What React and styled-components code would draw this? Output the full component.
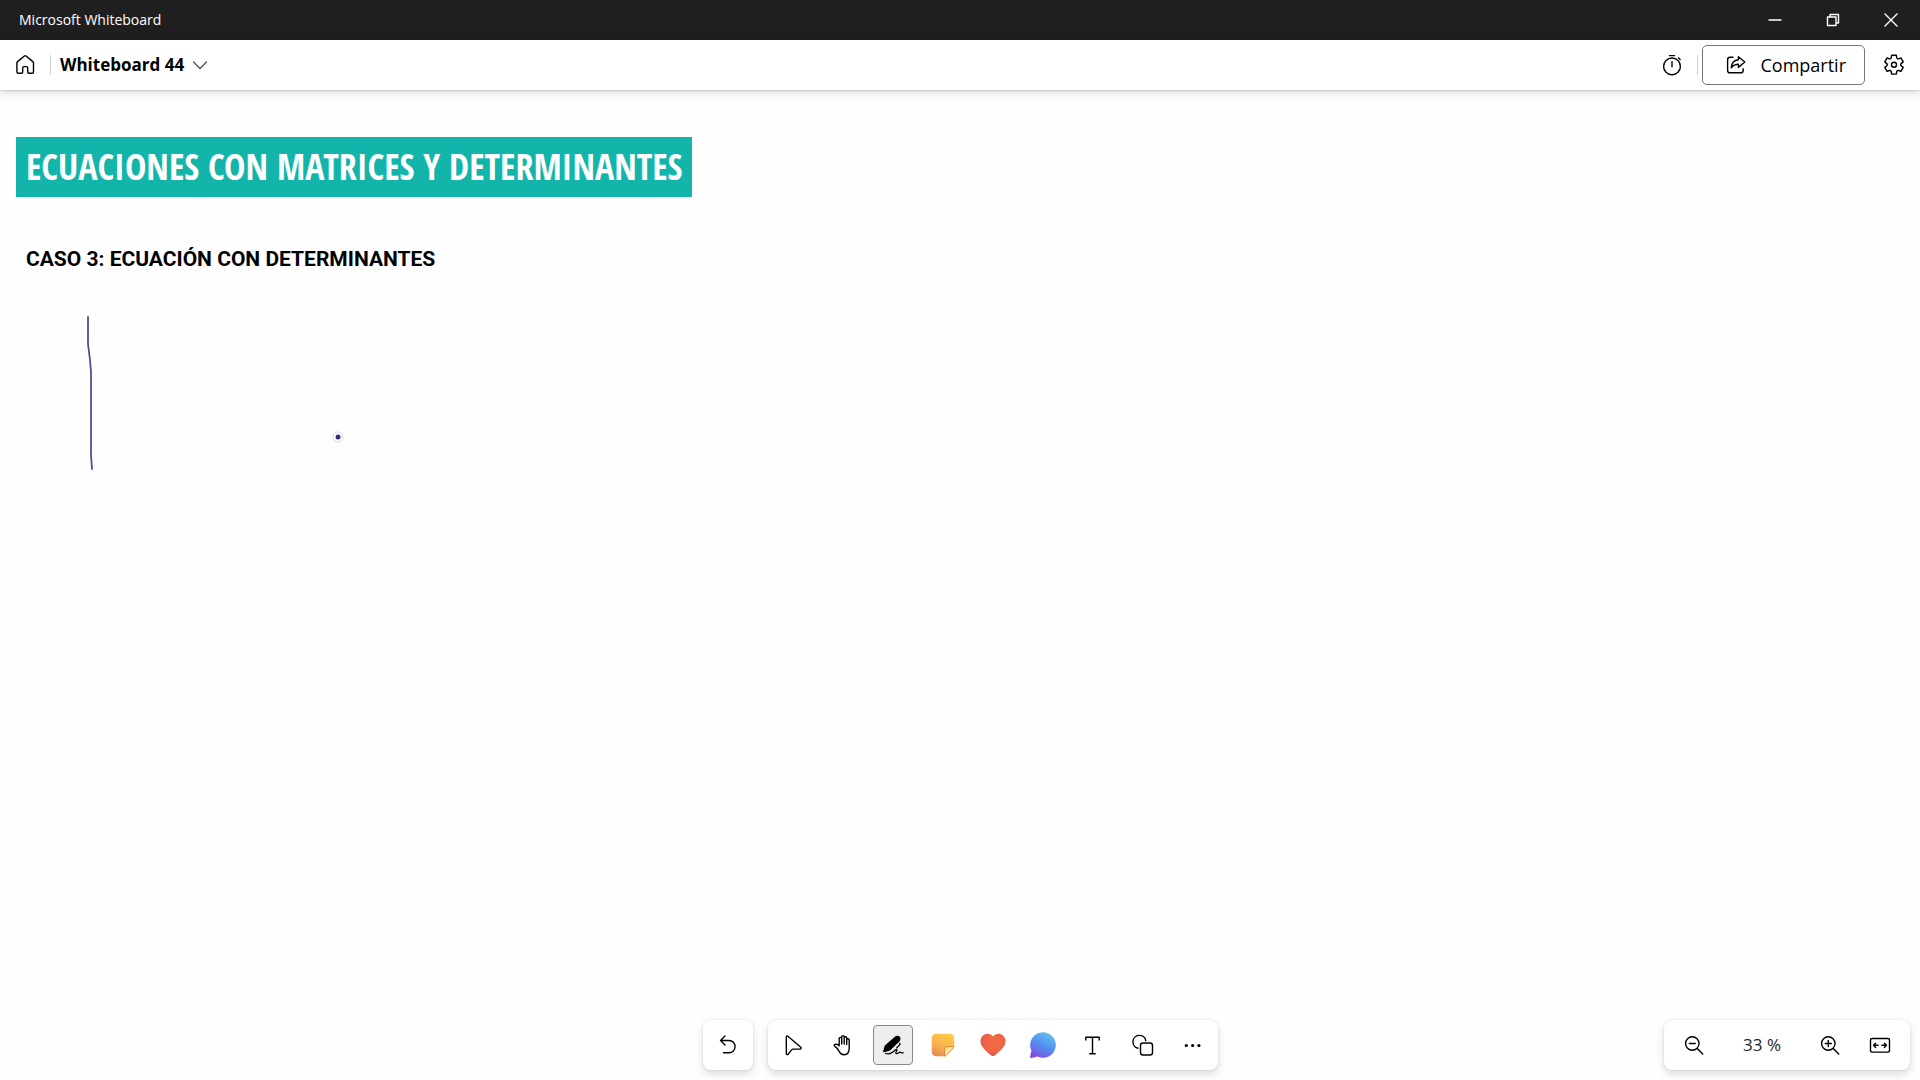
import React, { useState } from 'react';
import styled, { createGlobalStyle } from 'styled-components';

const GlobalStyle = createGlobalStyle`
  * {
    box-sizing: border-box;
  }
  body {
    margin: 0;
    background: #fefefe;
    font-family: "Open Sans", "Noto Sans", sans-serif;
  }
  button {
    font-family: inherit;
    padding: 0;
    border: none;
    background: none;
    color: inherit;
    cursor: pointer;
  }
`;

// Layout
const Page = styled.div`
  display: flex;
  flex-direction: column;
  min-height: 100vh;
`;

const TitleBar = styled.div`
  display: flex;
  align-items: stretch;
  justify-content: space-between;
  height: 40px;
  background: #1f1f1f;
  color: #fff;
`;

const AppName = styled.span`
  padding-left: 19px;
  font-size: 14px;
  line-height: 40px;
`;

const WindowControls = styled.div`
  display: flex;
`;

const WindowButton = styled.button`
  display: flex;
  align-items: center;
  justify-content: center;
  width: 58px;
`;

const Header = styled.header`
  display: flex;
  align-items: center;
  justify-content: space-between;
  height: 50px;
  background: #fff;
  box-shadow: 0 1px 2px rgba(0, 0, 0, 0.16), 0 4px 10px rgba(0, 0, 0, 0.1);
`;

const HeaderGroup = styled.div`
  display: flex;
  align-items: center;
`;

const IconButton = styled.button`
  display: flex;
  align-items: center;
  justify-content: center;
  width: ${(props) => props.$width || 50}px;
  height: 50px;
`;

const Divider = styled.span`
  width: 1px;
  height: 20px;
  background: #d1d1d1;
`;

const BoardName = styled.button`
  display: flex;
  align-items: center;
  gap: 8px;
  padding-left: 9px;
  font-size: 17px;
  font-weight: 700;
  line-height: 24px;
`;

const ShareButton = styled.button`
  display: flex;
  align-items: center;
  gap: 12px;
  height: 40px;
  margin: 0 3px 0 4px;
  padding: 0 18px 0 21px;
  border: 1px solid #767676;
  border-radius: 5px;
  background: #fff;
  font-size: 18px;
  line-height: 24px;
`;

// Board content
const Board = styled.main`
  position: relative;
  flex: 1;
  padding: 47px 16px 0;
`;

const Banner = styled.h1`
  width: max-content;
  margin: 0;
  padding: 0 10px;
  background: #13b5aa;
  color: #fff;
  font-family: "Open Sans Condensed", "Liberation Sans Narrow", sans-serif;
  font-size: 36px;
  font-weight: 700;
  line-height: 60px;
`;

const CaseTitle = styled.h2`
  margin: 50px 0 0 10px;
  font-family: Roboto, "Liberation Sans", sans-serif;
  font-size: 21px;
  font-weight: 700;
  line-height: 24px;
`;

const Ink = styled.svg`
  position: absolute;
  top: 0;
  left: 0;
`;

// Bottom bar
const Footer = styled.footer`
  display: grid;
  grid-template-columns: 1fr auto 1fr;
  padding: 0 10px 10px;
`;

const ToolGroups = styled.div`
  grid-column: 2;
  display: flex;
  gap: 15px;
`;

const Panel = styled.div`
  display: flex;
  align-items: center;
  height: 50px;
  padding: 0 ${(props) => props.$pad || 0}px;
  border-radius: 8px;
  background: #fff;
  box-shadow: 0 0 2px rgba(0, 0, 0, 0.12), 0 4px 8px rgba(0, 0, 0, 0.14);
`;

const ZoomPanel = styled(Panel)`
  justify-self: end;
`;

const Tool = styled.button`
  display: flex;
  align-items: center;
  justify-content: center;
  width: 40px;
  height: 40px;
  margin: 0 5px;
  border: 1px solid ${(props) => (props.$active ? '#8a8a8a' : 'transparent')};
  border-radius: 4px;
  background: ${(props) => (props.$active ? '#ededed' : 'transparent')};
`;

const ZoomLevel = styled.span`
  width: 86px;
  text-align: center;
  color: #242424;
  font-size: 17px;
  line-height: 24px;
`;

const Svg = styled.svg`
  display: block;
  flex: none;
  fill: none;
  stroke: currentColor;
  stroke-width: 1.4;
  stroke-linecap: round;
  stroke-linejoin: round;
`;

const Icon = ({ size = 24, children }) => (
  <Svg width={size} height={size} viewBox={`0 0 ${size} ${size}`} aria-hidden="true">
    {children}
  </Svg>
);

const HomeIcon = () => (
  <Icon>
    <path d="M11.4 3 4.6 8.6a1.8 1.8 0 0 0-.7 1.4v9c0 .8.5 1.3 1.3 1.3h3.2c.8 0 1.3-.5 1.3-1.3v-4.2c0-.7.5-1.2 1.2-1.2h2.6c.7 0 1.2.5 1.2 1.2V19c0 .8.5 1.3 1.3 1.3h3.2c.8 0 1.3-.5 1.3-1.3v-9c0-.5-.3-1-.7-1.4L13 3a1.3 1.3 0 0 0-1.6 0z" />
  </Icon>
);

const TimerIcon = () => (
  <Icon>
    <circle cx="12" cy="13.4" r="8.4" />
    <path d="M9.5 2.6h5M12 8.8v5M18.6 4.9l1.5 1.5" />
  </Icon>
);

const ShareIcon = () => (
  <Icon>
    <path d="M9 4.2H6A2.4 2.4 0 0 0 3.6 6.6v10.8A2.4 2.4 0 0 0 6 19.8h10.8a2.4 2.4 0 0 0 2.4-2.4v-1.6" />
    <path d="M14.4 3.7v3.1C10 7.2 7.7 10 7.2 14.8c2-2.5 4.2-3.5 7.2-3.5v3.1l6.4-5.4z" />
  </Icon>
);

const GearIcon = () => (
  <Icon>
    <path d="M9.7 2.2h4.6l.5 2.6c.2.9.9 1.3 1.7 1l2.4-.9 2.3 4-2 1.700c-.7.6-.7 1.5 0 2.1l2 1.7-2.3 4-2.4-.9c-.8-.3-1.500.1-1.700 1l-.5 2.600H9.700l-.5-2.600c-.2-.9-.9-1.300-1.700-1l-2.400.9-2.300-4 2-1.700c.7-.6.7-1.500 0-2.100l-2-1.700 2.300-4 2.400.9c.8.3 1.500-.1 1.700-1z" />
    <circle cx="12" cy="11.7" r="2.5" />
  </Icon>
);

const UndoIcon = () => (
  <Icon>
    <path d="M9 3 4.5 7.5 9 12M4.5 7.5H13a6.1 6.1 0 0 1 0 12.2H7.5" />
  </Icon>
);

const SelectIcon = () => (
  <Icon>
    <path d="M5.3 4.1v16.4c0 1.1 1.1 1.5 1.8.7l3.5-4.3c.4-.5.9-.8 1.6-.8h6.9c1.1 0 1.5-1.2.7-1.9L6.9 3.3c-.7-.6-1.6-.1-1.6.8z" />
  </Icon>
);

const HandIcon = () => (
  <Icon>
    <path d="M8.2 12.8V5.6a1.25 1.25 0 0 1 2.5 0V11M10.7 5.6V3.9a1.25 1.25 0 0 1 2.5 0V11M13.2 5a1.25 1.25 0 0 1 2.5 0v6.5M15.7 7a1.25 1.25 0 0 1 2.5 0v8c0 4-1.7 6.8-5.2 6.8-2.5 0-3.9-1.3-5-3.5-1.2-2.3-2.3-3.8-4.3-5.1-.8-.5-.6-1.5.3-1.8 1.7-.5 3.1.1 4.2 1.4" />
  </Icon>
);

const PenIcon = () => (
  <Icon>
    <path
      d="M13.6 4c1.5-1.5 3.7-1.6 5-.4s1.2 3.4-.3 4.9L9.6 17c-.5.5-1.1.8-1.8 1l-4.9 1.2c-.5.1-.9-.3-.8-.8l1.3-4.6c.2-.7.5-1.2 1-1.7z"
      fill="currentColor"
      stroke="none"
    />
    <path
      d="M4.5 20.5c2.800.9 5.300.3 7.300-1.400 1.500-1.300 3.300-3.200 4.100-2.500s-1.900 3-1 3.800 2-.3 2.900-.8c1.200-.7 1.600-.4 2.400 0s1.400.4 2 .2M18.600 10.200c.6.600.4 1.300-.2 1.900l-2.600 2.600"
      strokeWidth="1.3"
    />
  </Icon>
);

const NoteIcon = () => (
  <Icon>
    <defs>
      <linearGradient id="note" x1="0.7" y1="0" x2="0.15" y2="1">
        <stop offset="0" stopColor="#fcc945" />
        <stop offset="0.55" stopColor="#f8b34f" />
        <stop offset="1" stopColor="#e58650" />
      </linearGradient>
      <linearGradient id="fold" x1="0" y1="0" x2="0.7" y2="0.7">
        <stop offset="0" stopColor="#fbd075" />
        <stop offset="1" stopColor="#fff0b8" />
      </linearGradient>
    </defs>
    <path
      d="M5 .8h14A4.2 4.2 0 0 1 23.2 5v8.8l-9.4 9.4H5A4.2 4.2 0 0 1 .8 19V5A4.2 4.2 0 0 1 5 .8z"
      fill="url(#note)"
      stroke="none"
    />
    <path
      d="M13.4 22.8V17a3.6 3.6 0 0 1 3.6-3.6h5.8c0 .9-.4 1.6-1 2.2l-6.2 6.2c-.6.6-1.3 1-2.2 1z"
      fill="url(#fold)"
      stroke="#d98a35"
      strokeWidth="1"
    />
  </Icon>
);

const HeartIcon = () => (
  <Icon size={26}>
    <defs>
      <radialGradient id="heart" cx="0.55" cy="0.4" r="0.65">
        <stop offset="0" stopColor="#f46a43" />
        <stop offset="0.65" stopColor="#ed6446" />
        <stop offset="1" stopColor="#c85456" />
      </radialGradient>
    </defs>
    <path
      d="M13 4.6C10.5 1.3 6 1 3 3.5 0 6.2-.3 10.8 2 14.2c2.4 3.6 6 6.6 9.3 9.2a2.7 2.7 0 0 0 3.4 0c3.3-2.6 6.9-5.6 9.3-9.2 2.3-3.4 2-8-1-10.7-3-2.5-7.5-2.2-10 1.1z"
      fill="url(#heart)"
      stroke="none"
    />
  </Icon>
);

const CommentIcon = () => (
  <Icon size={26}>
    <defs>
      <linearGradient id="bubble" x1="0.75" y1="0.05" x2="0.25" y2="1">
        <stop offset="0" stopColor="#62bdee" />
        <stop offset="0.5" stopColor="#548fee" />
        <stop offset="0.8" stopColor="#6d68e6" />
        <stop offset="1" stopColor="#8c44d8" />
      </linearGradient>
    </defs>
    <path
      d="M13 .2A12.8 12.8 0 1 1 7.6 24.6L1.4 25.9C.6 26 0 25.4.2 24.6L1.4 18.6A12.8 12.8 0 0 1 13 .2z"
      fill="url(#bubble)"
      stroke="none"
    />
  </Icon>
);

const TextIcon = () => (
  <Icon>
    <path d="M4.8 7V4.3h13.4V7M11.5 4.3v16.4M8.8 20.7h5.4" />
  </Icon>
);

const ShapesIcon = () => (
  <Icon>
    <path d="M7 15.2A6.5 6.5 0 1 1 14.8 7.5" />
    <rect x="9.5" y="10" width="12" height="12" rx="2.5" />
  </Icon>
);

const MoreIcon = () => (
  <Icon>
    <g fill="currentColor" stroke="none">
      <circle cx="5.3" cy="12.5" r="1.6" />
      <circle cx="11.6" cy="12.5" r="1.6" />
      <circle cx="17.9" cy="12.5" r="1.6" />
    </g>
  </Icon>
);

const ZoomIcon = ({ plus }) => (
  <Icon>
    <circle cx="10.3" cy="10.5" r="6.7" />
    <path d="M7.3 10.5h6M15.2 15.4l5.5 5.5" />
    {plus && <path d="M10.3 7.5v6" />}
  </Icon>
);

const FitIcon = () => (
  <Icon>
    <rect x="2.5" y="5.5" width="19" height="13.6" rx="1.5" />
    <path d="M10 12.3H5.7M7.6 10.2l-2.1 2.1 2.1 2.1M14 12.3h4.3M16.4 10.2l2.1 2.1-2.1 2.1" />
  </Icon>
);

const tools = [
  { name: 'Seleccionar', icon: SelectIcon },
  { name: 'Desplazar', icon: HandIcon },
  { name: 'Entrada manuscrita', icon: PenIcon },
  { name: 'Notas', icon: NoteIcon },
  { name: 'Reacciones', icon: HeartIcon },
  { name: 'Comentario', icon: CommentIcon },
  { name: 'Texto', icon: TextIcon },
  { name: 'Formas', icon: ShapesIcon },
  { name: 'Más opciones', icon: MoreIcon },
];

function App() {
  const [activeTool, setActiveTool] = useState('Entrada manuscrita');
  const [zoom, setZoom] = useState(33);

  return (
    <Page>
      <GlobalStyle />
      <TitleBar>
        <AppName>Microsoft Whiteboard</AppName>
        <WindowControls>
          <WindowButton aria-label="Minimizar">
            <Icon size={14}><path d="M1 7h12" /></Icon>
          </WindowButton>
          <WindowButton aria-label="Restaurar">
            <Icon size={14}>
              <path d="M1.5 4H10v8.5H1.5zM4 4V1.5h8.5V10H10" />
            </Icon>
          </WindowButton>
          <WindowButton aria-label="Cerrar">
            <Icon size={14}><path d="M1 1l12 12M13 1 1 13" /></Icon>
          </WindowButton>
        </WindowControls>
      </TitleBar>

      <Header>
        <HeaderGroup>
          <IconButton aria-label="Inicio"><HomeIcon /></IconButton>
          <Divider />
          <BoardName>
            Whiteboard 44
            <Icon size={16}><path d="M1.5 5 8 11.5 14.5 5" stroke="#555" /></Icon>
          </BoardName>
        </HeaderGroup>
        <HeaderGroup>
          <IconButton aria-label="Temporizador"><TimerIcon /></IconButton>
          <Divider />
          <ShareButton>
            <ShareIcon />
            Compartir
          </ShareButton>
          <IconButton aria-label="Configuración" $width={52}><GearIcon /></IconButton>
        </HeaderGroup>
      </Header>

      <Board>
        <Banner>ECUACIONES CON MATRICES Y DETERMINANTES</Banner>
        <CaseTitle>CASO 3: ECUACIÓN CON DETERMINANTES</CaseTitle>
        <Ink width="400" height="400" viewBox="0 0 400 400" aria-hidden="true">
          <path
            d="M88 227 88 254 90 270 91 282 91 365 92 379"
            fill="none"
            stroke="#5f4a86"
            strokeWidth="1.8"
            strokeLinecap="round"
            strokeLinejoin="round"
          />
          <circle cx="338" cy="347" r="5" fill="#fff" stroke="#e3d3ee" />
          <circle cx="338" cy="347" r="2.5" fill="#3b2a78" />
        </Ink>
      </Board>

      <Footer>
        <ToolGroups>
          <Panel>
            <Tool aria-label="Deshacer"><UndoIcon /></Tool>
          </Panel>
          <Panel>
            {tools.map(({ name, icon: ToolIcon }) => (
              <Tool
                key={name}
                aria-label={name}
                $active={name === activeTool}
                onClick={() => setActiveTool(name)}
              >
                <ToolIcon />
              </Tool>
            ))}
          </Panel>
        </ToolGroups>
        <ZoomPanel $pad={5}>
          <Tool aria-label="Alejar" onClick={() => setZoom(zoom - 1)}><ZoomIcon /></Tool>
          <ZoomLevel>{zoom} %</ZoomLevel>
          <Tool aria-label="Acercar" onClick={() => setZoom(zoom + 1)}><ZoomIcon plus /></Tool>
          <Tool aria-label="Ajustar a la pantalla"><FitIcon /></Tool>
        </ZoomPanel>
      </Footer>
    </Page>
  );
}

export default App;
